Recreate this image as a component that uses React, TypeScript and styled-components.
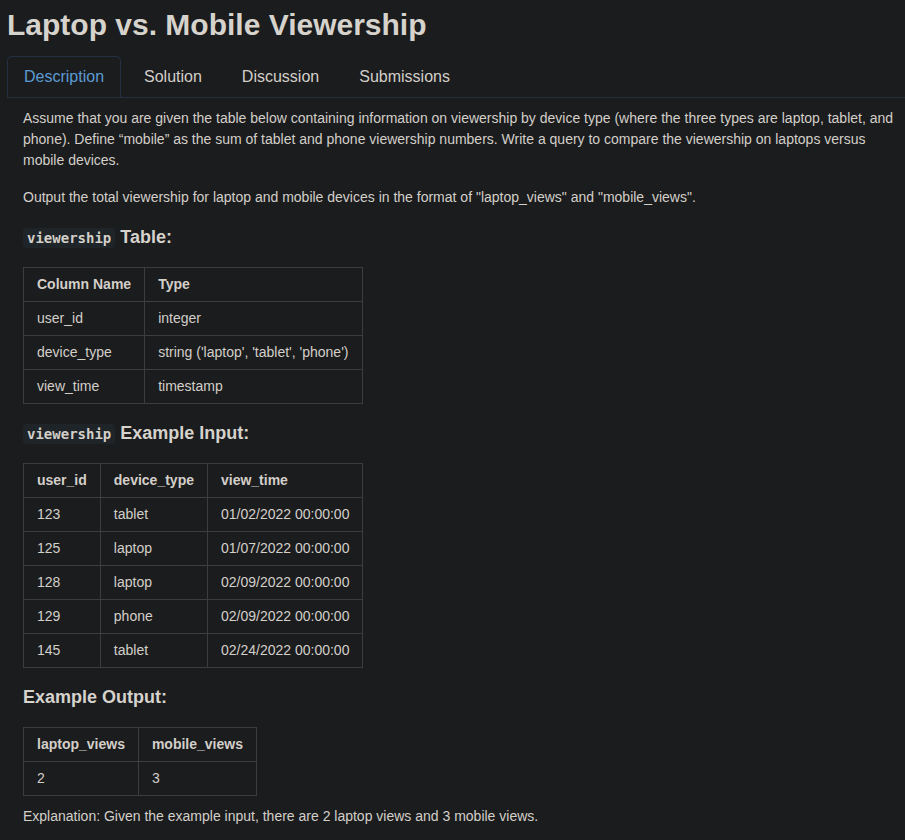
import React from "react";
import styled, { createGlobalStyle } from "styled-components";

const GlobalStyle = createGlobalStyle`
  html, body {
    margin: 0;
    padding: 0;
    background: #1b1c1e;
  }
  body {
    font-family: "Liberation Sans", Arial, sans-serif;
    color: #d3cfc9;
  }
`;

const Page = styled.div`
  padding: 7px 0 20px 7px;
  min-height: 840px;
  box-sizing: border-box;
`;

const Title = styled.h1`
  margin: 0 0 13px;
  font-size: 30px;
  line-height: 36px;
  font-weight: 700;
  color: #d6d2cc;
`;

const TabBar = styled.nav`
  display: flex;
  gap: 6px;
  border-bottom: 1px solid #243140;
`;

const Tab = styled.div<{ $active?: boolean }>`
  padding: 8px 16px;
  font-size: 16px;
  line-height: 24px;
  border: 1px solid ${(p) => (p.$active ? "#243140" : "transparent")};
  border-bottom: none;
  border-radius: 5px 5px 0 0;
  color: ${(p) => (p.$active ? "#5b9bd3" : "#d3cfc9")};
`;

const Content = styled.div`
  padding: 10px 8px 0 16px;
  font-size: 14px;
  line-height: 21px;
`;

const Para = styled.p<{ $tight?: boolean }>`
  margin: ${(p) => (p.$tight ? "0" : "0 0 16px")};
`;

const Heading = styled.h3`
  margin: 16px 0;
  font-size: 18px;
  line-height: 27px;
  font-weight: 700;
  color: #d6d2cc;
`;

const Code = styled.code`
  font-family: "DejaVu Sans Mono", "Liberation Mono", monospace;
  font-size: 14px;
  line-height: 1;
  font-weight: 700;
  background: #1e2428;
  padding: 2px 4px;
  border-radius: 3px;
  color: #d3cfc9;
`;

const Table = styled.table`
  border-collapse: collapse;
  margin-bottom: 10px;
`;

const Th = styled.th`
  border: 1px solid #3b3e41;
  padding: 6px 13px;
  text-align: left;
  font-weight: 700;
  white-space: nowrap;
`;

const Td = styled.td`
  border: 1px solid #3b3e41;
  padding: 6px 13px;
  white-space: nowrap;
`;

type DataTableProps = { head: string[]; rows: string[][] };

const DataTable = ({ head, rows }: DataTableProps) => (
  <Table>
    <thead>
      <tr>
        {head.map((h) => (
          <Th key={h}>{h}</Th>
        ))}
      </tr>
    </thead>
    <tbody>
      {rows.map((r, i) => (
        <tr key={i}>
          {r.map((c, j) => (
            <Td key={j}>{c}</Td>
          ))}
        </tr>
      ))}
    </tbody>
  </Table>
);

export default function App() {
  return (
    <>
      <GlobalStyle />
      <Page>
        <Title>Laptop vs. Mobile Viewership</Title>
        <TabBar>
          <Tab $active>Description</Tab>
          <Tab>Solution</Tab>
          <Tab>Discussion</Tab>
          <Tab>Submissions</Tab>
        </TabBar>
        <Content>
          <Para>
            Assume that you are given the table below containing information on viewership by device type
            (where the three types are laptop, tablet, and phone). Define “mobile” as the sum of tablet and
            phone viewership numbers. Write a query to compare the viewership on laptops versus mobile
            devices.
          </Para>
          <Para>
            Output the total viewership for laptop and mobile devices in the format of "laptop_views" and
            "mobile_views".
          </Para>
          <Heading>
            <Code>viewership</Code> Table:
          </Heading>
          <DataTable
            head={["Column Name", "Type"]}
            rows={[
              ["user_id", "integer"],
              ["device_type", "string ('laptop', 'tablet', 'phone')"],
              ["view_time", "timestamp"],
            ]}
          />
          <Heading>
            <Code>viewership</Code> Example Input:
          </Heading>
          <DataTable
            head={["user_id", "device_type", "view_time"]}
            rows={[
              ["123", "tablet", "01/02/2022 00:00:00"],
              ["125", "laptop", "01/07/2022 00:00:00"],
              ["128", "laptop", "02/09/2022 00:00:00"],
              ["129", "phone", "02/09/2022 00:00:00"],
              ["145", "tablet", "02/24/2022 00:00:00"],
            ]}
          />
          <Heading>Example Output:</Heading>
          <DataTable head={["laptop_views", "mobile_views"]} rows={[["2", "3"]]} />
          <Para $tight>Explanation: Given the example input, there are 2 laptop views and 3 mobile views.</Para>
        </Content>
      </Page>
    </>
  );
}
